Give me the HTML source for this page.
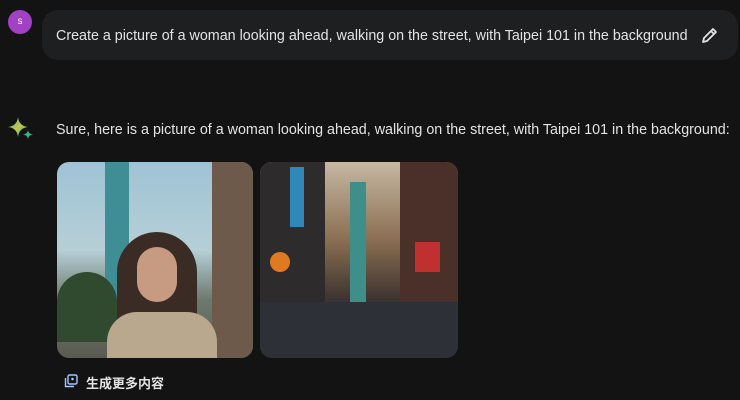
<!DOCTYPE html>
<html><head><style>
body{margin:0;width:740px;height:400px;background:#131314;font-family:"Liberation Sans","Noto Sans CJK SC",sans-serif;color:#e3e3e3;position:relative;overflow:hidden}
.av{position:absolute;left:8px;top:10px;width:24px;height:24px;border-radius:50%;background:#a142c4;color:#fff;font-size:10px;text-align:center;line-height:24px}
.bub{position:absolute;left:42px;top:10px;width:696px;height:50px;border-radius:16px;background:#1e1f20}
.t1{position:absolute;left:56px;top:28px;font-size:14.3px;white-space:nowrap}
.t2{position:absolute;left:56px;top:122px;font-size:14.3px;white-space:nowrap}
.img{position:absolute;top:162px;height:196px;border-radius:12px;overflow:hidden}
.more{position:absolute;left:86px;top:373px;font-size:13px;font-weight:bold}
</style></head><body>
<div class="av">s</div>
<div class="bub"></div>
<div class="t1">Create a picture of a woman looking ahead, walking on the street, with Taipei 101 in the background</div>
<svg style="position:absolute;left:700px;top:25px" width="20" height="20" viewBox="0 0 20 20"><path d="M3 17 L4 13 L13 4 L16 7 L7 16 Z M11 6 L14 9" fill="none" stroke="#e3e3e3" stroke-width="1.8" stroke-linejoin="round"/></svg>
<svg style="position:absolute;left:8px;top:116px" width="26" height="26" viewBox="0 0 26 26"><defs><linearGradient id="g" x1="0" y1="0" x2="1" y2="1"><stop offset="0" stop-color="#4f9bd9"/><stop offset=".5" stop-color="#c2c94a"/><stop offset="1" stop-color="#3cb37a"/></linearGradient></defs><path d="M10 1 Q11 10 20 11 Q11 12 10 21 Q9 12 0 11 Q9 10 10 1Z" fill="url(#g)"/><path d="M20 14 Q20.5 18 25 18.5 Q20.5 19 20 23 Q19.5 19 15 18.5 Q19.5 18 20 14Z" fill="#3cb37a"/></svg>
<div class="t2">Sure, here is a picture of a woman looking ahead, walking on the street, with Taipei 101 in the background:</div>
<div class="img" style="left:57px;width:196px;background:linear-gradient(180deg,#9fc3d6 0%,#b6cfd6 45%,#6d7a6e 70%,#5b5a50 100%)">
<div style="position:absolute;left:48px;top:0;width:24px;height:140px;background:#3f8e95"></div>
<div style="position:absolute;left:155px;top:0;width:41px;height:196px;background:#6d5a4a"></div>
<div style="position:absolute;left:0;top:110px;width:60px;height:70px;background:#2f4a2e;border-radius:30px 30px 0 0"></div>
<div style="position:absolute;left:60px;top:70px;width:80px;height:126px;background:#3a2c24;border-radius:40px 40px 0 0"></div>
<div style="position:absolute;left:80px;top:85px;width:40px;height:55px;background:#c79b82;border-radius:20px"></div>
<div style="position:absolute;left:50px;top:150px;width:110px;height:46px;background:#b9a88d;border-radius:30px 30px 0 0"></div>
</div>
<div class="img" style="left:260px;width:198px;background:linear-gradient(180deg,#c6b8a2 0%,#8a6e52 40%,#3d3430 70%,#2a2a30 100%)">
<div style="position:absolute;left:0;top:0;width:65px;height:150px;background:#2e2b2c"></div>
<div style="position:absolute;left:140px;top:0;width:58px;height:150px;background:#4a3028"></div>
<div style="position:absolute;left:90px;top:20px;width:16px;height:130px;background:#3e8e8a"></div>
<div style="position:absolute;left:30px;top:5px;width:14px;height:60px;background:#2f88b8"></div>
<div style="position:absolute;left:10px;top:90px;width:20px;height:20px;border-radius:50%;background:#e07a20"></div>
<div style="position:absolute;left:155px;top:80px;width:25px;height:30px;background:#c03030"></div>
<div style="position:absolute;left:0;top:140px;width:198px;height:56px;background:#2d3036"></div>
</div>
<svg style="position:absolute;left:64px;top:374px" width="14" height="14" viewBox="0 0 14 14"><rect x="4" y="1" width="9" height="9" rx="1.5" fill="none" stroke="#a8c7fa" stroke-width="1.4"/><path d="M1.5 4 V12.5 H10" fill="none" stroke="#a8c7fa" stroke-width="1.4"/><circle cx="8.5" cy="5" r="1.3" fill="#a8c7fa"/></svg>
<div class="more">生成更多内容</div>
</body></html>
